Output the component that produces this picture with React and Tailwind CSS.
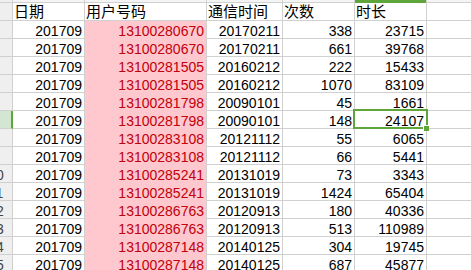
import React from "react";

const data = [
  ["201709", "13100280670", "20170211", "338", "23715"],
  ["201709", "13100280670", "20170211", "661", "39768"],
  ["201709", "13100281505", "20160212", "222", "15433"],
  ["201709", "13100281505", "20160212", "1070", "83109"],
  ["201709", "13100281798", "20090101", "45", "1661"],
  ["201709", "13100281798", "20090101", "148", "24107"],
  ["201709", "13100283108", "20121112", "55", "6065"],
  ["201709", "13100283108", "20121112", "66", "5441"],
  ["201709", "13100285241", "20131019", "73", "3343"],
  ["201709", "13100285241", "20131019", "1424", "65404"],
  ["201709", "13100286763", "20120913", "180", "40336"],
  ["201709", "13100286763", "20120913", "513", "110989"],
  ["201709", "13100287148", "20140125", "304", "19745"],
  ["201709", "13100287148", "20140125", "687", "45877"],
];

const num =
  "h-[18px] shrink-0 box-border border-r border-b border-[#d0d0d0] text-right pr-[2px] pt-[2px] text-[14px] leading-[17px] whitespace-nowrap";
const head =
  "h-[18px] shrink-0 box-border border-r border-b border-[#d0d0d0] pl-[1px] text-[15px] leading-[15px] whitespace-nowrap font-['Noto_Sans_CJK_SC',sans-serif] text-black";

export default function App() {
  return (
    <div className="relative w-[471px] h-[270px] overflow-hidden bg-white font-['Liberation_Sans','Noto_Sans_CJK_SC',sans-serif] text-black">
      {/* top strip (column headers cut off) */}
      <div className="flex h-[3px]">
        <div className="w-[13px] shrink-0 box-border border-r border-b border-[#d0d0d0] bg-[#efefef]" />
        <div className="w-[72px] shrink-0 box-border border-r border-b border-[#d0d0d0] bg-[#f4f4f4]" />
        <div className="w-[122px] shrink-0 box-border border-r border-b border-[#d0d0d0] bg-[#f4f4f4]" />
        <div className="w-[76px] shrink-0 box-border border-r border-b border-[#d0d0d0] bg-[#f4f4f4]" />
        <div className="w-[72px] shrink-0 box-border border-r border-b border-[#d0d0d0] bg-[#f4f4f4]" />
        <div className="w-[72px] shrink-0 box-border border-r border-[#d0d0d0] bg-[#5fa63a]" />
        <div className="flex-1 box-border border-b border-[#d0d0d0] bg-[#f4f4f4]" />
      </div>

      {/* header row */}
      <div className="flex">
        <div className="w-[13px] h-[18px] shrink-0 box-border border-r border-b border-[#d0d0d0] bg-[#efefef]" />
        <div className={`w-[72px] ${head}`}>日期</div>
        <div className={`w-[122px] ${head}`}>用户号码</div>
        <div className={`w-[76px] ${head}`}>通信时间</div>
        <div className={`w-[72px] ${head}`}>次数</div>
        <div className={`w-[72px] ${head}`}>时长</div>
        <div className="flex-1 h-[18px] box-border border-b border-[#d0d0d0]" />
      </div>

      {data.map((r, i) => {
        const n = i + 2;
        const sel = i === 5;
        return (
          <div key={i} className="flex">
            <div
              className={
                sel
                  ? "w-[13px] h-[18px] shrink-0 overflow-hidden box-border border-r-2 border-r-[#5fa63a] border-b border-b-[#d0d0d0] bg-[#d2e6d2]"
                  : "w-[13px] h-[18px] shrink-0 overflow-hidden box-border border-r border-b border-[#d0d0d0] bg-[#efefef]"
              }
            >
              <div className="w-[32px] ml-[-20px] text-center pt-[2px] text-[14px] leading-[17px] text-[#444]">
                {n}
              </div>
            </div>
            <div className={`w-[72px] ${num}`}>{r[0]}</div>
            <div className="w-[122px] h-[18px] shrink-0 box-border border-r border-r-[#d0d0d0] border-b border-b-[#ffc7ce] bg-[#ffc7ce] text-right pr-[2px] pt-[2px] text-[14px] leading-[17px] whitespace-nowrap text-[#c0000c]">
              {r[1]}
            </div>
            <div className={`w-[76px] ${num}`}>{r[2]}</div>
            <div className={`w-[72px] ${num}`}>{r[3]}</div>
            <div className={`w-[72px] ${num}`}>{r[4]}</div>
            <div className="flex-1 h-[18px] box-border border-b border-[#d0d0d0]" />
          </div>
        );
      })}

      {/* active cell selection */}
      <div className="absolute left-[353px] top-[109px] w-[75px] h-[20px] box-border border-2 border-[#5fa63a]" />
      <div className="absolute left-[423px] top-[125px] w-[6px] h-[6px] box-border border-l border-t border-white bg-[#5fa63a]" />
    </div>
  );
}
